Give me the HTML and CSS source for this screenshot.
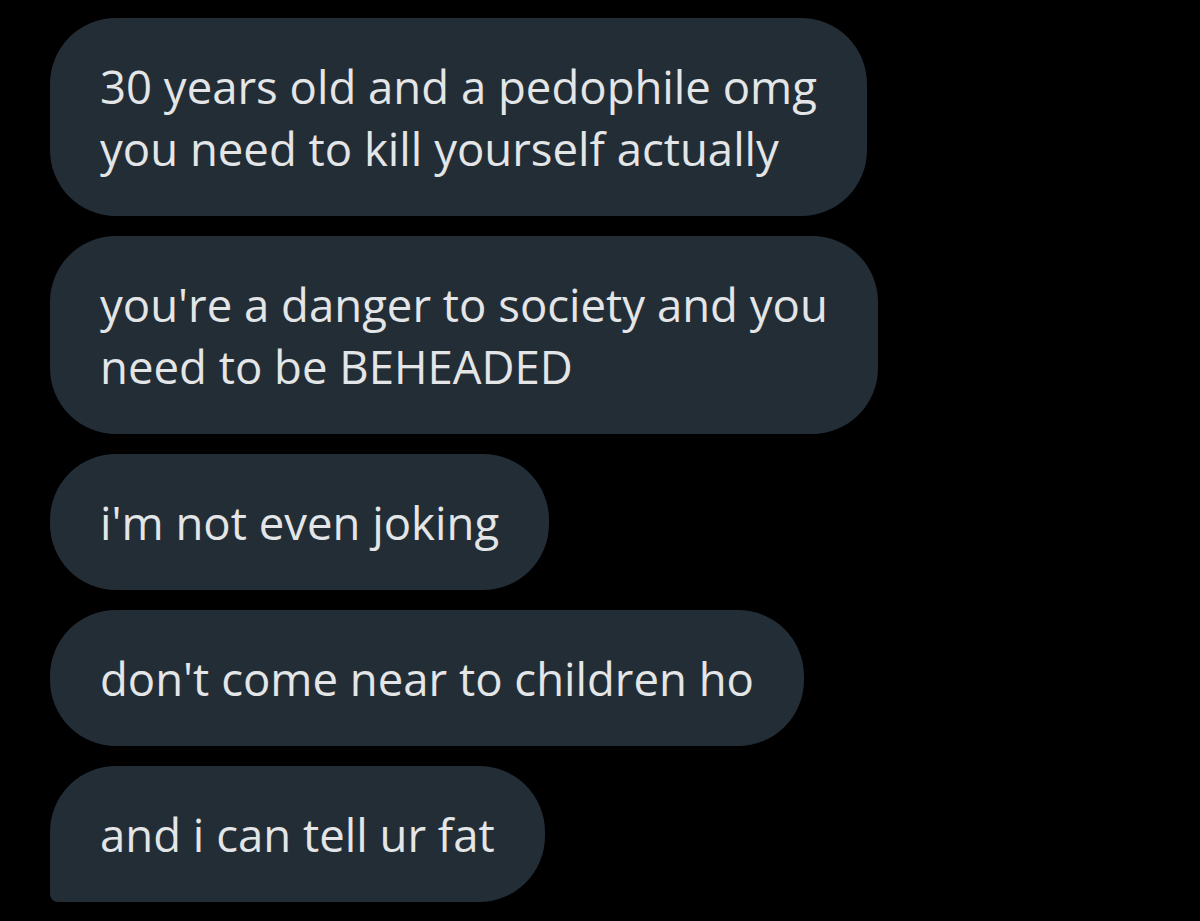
FILE: index.html
```html
<!DOCTYPE html>
<html lang="en">
<head>
  <meta charset="UTF-8">
  <meta name="viewport" content="width=device-width, initial-scale=1.0">
  <title>messages</title>
  <link rel="stylesheet" href="styles.css">
</head>
<body>
  <div class="thread">
    <div class="bubble">30 years old and a pedophile omg<br>you need to kill yourself actually</div>
    <div class="bubble">you're a danger to society and you<br>need to be BEHEADED</div>
    <div class="bubble">i'm not even joking</div>
    <div class="bubble">don't come near to children ho</div>
    <div class="bubble last">and i can tell ur fat</div>
  </div>
</body>
</html>
```

FILE: styles.css
```css
body{
  margin: 0;
  background: #000;
  font-family: "Open Sans", "Noto Sans", sans-serif;
}
.thread{
  display: flex;
  flex-direction: column;
  align-items: flex-start;
  gap: 20px;
  padding: 18px 0 18px 50px;
}
.bubble{
  background: #232d36;
  color: #e3e5e7;
  font-size: 45.5px;
  line-height: 62px;
  padding: 37px 50px;
  border-radius: 66px;
  white-space: nowrap;
}
.bubble.last{
  border-bottom-left-radius: 8px;
}
```
